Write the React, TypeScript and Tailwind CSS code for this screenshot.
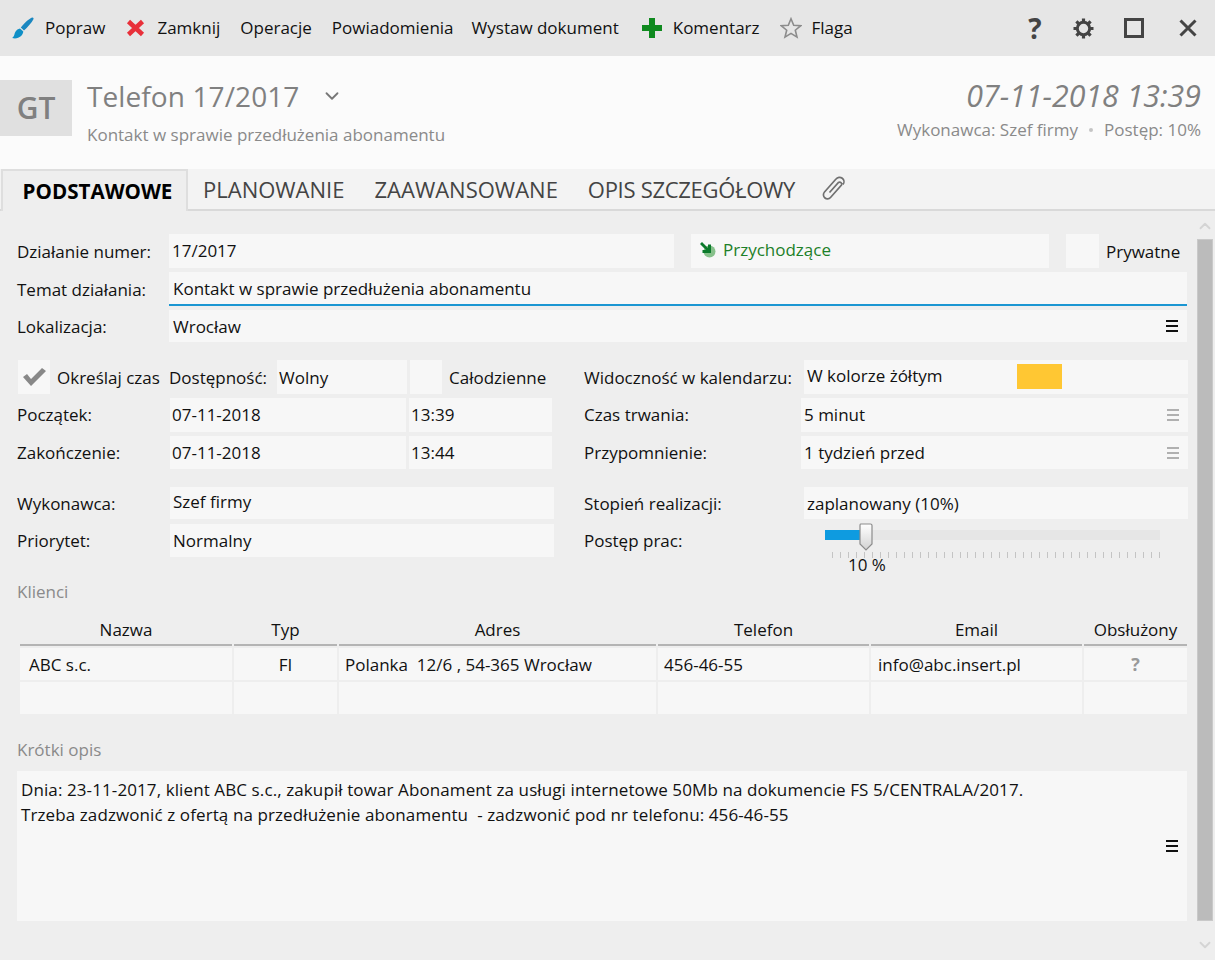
import type { ReactNode } from "react";
import { ChevronDown, ChevronUp } from "lucide-react";

const Menu = ({ light }: { light?: boolean }) => (
  <span className={`flex w-[12px] flex-col gap-[3px] ${light ? "opacity-30" : ""}`}>
    <span className="h-[2px] bg-[#111]" />
    <span className="h-[2px] bg-[#111]" />
    <span className="h-[2px] bg-[#111]" />
  </span>
);

const Brush = () => (
  <svg width="22" height="22" viewBox="0 0 22 22">
    <path d="M20 0.5 C21.5 0.3 22 1.5 21.3 2.6 C19.5 6 15.5 10.5 12 13.6 L8.8 10.6 C12 6.6 16.5 2 20 0.5 Z" fill="#1b87c0" />
    <path d="M8 11.5 L11.3 14.6 C11 18.5 7 22.2 1 21.3 C0.3 21.2 0.3 20.6 0.8 20.2 C2.6 19 2.2 16.5 3.6 14.4 C4.6 13 6 12 8 11.5 Z" fill="#0f8fc6" />
  </svg>
);

const RedX = () => (
  <svg width="19" height="18" viewBox="0 0 19 18">
    <path d="M2.5 2.5 L16.5 15.5 M16.5 2.5 L2.5 15.5" stroke="#e8303a" strokeWidth="4.6" fill="none" />
  </svg>
);

const Plus = () => (
  <svg width="22" height="22" viewBox="0 0 22 22">
    <path d="M8 1 H14 V8 H21 V14 H14 V21 H8 V14 H1 V8 H8 Z" fill="#0f8a1f" />
  </svg>
);

const StarOutline = () => (
  <svg width="22" height="22" viewBox="0 0 22 22">
    <path d="M11 1.8 L13.7 8.3 L20.6 8.8 L15.3 13.2 L17 20.1 L11 16.4 L5 20.1 L6.7 13.2 L1.4 8.8 L8.3 8.3 Z" fill="none" stroke="#8c8c8c" strokeWidth="1.6" strokeLinejoin="miter" />
  </svg>
);

const Gear = () => (
  <svg width="21" height="21" viewBox="0 0 21 21">
    <circle cx="10.5" cy="10.5" r="6.2" fill="none" stroke="#444" strokeWidth="3" />
    <path d="M10.5 0.5 V4 M10.5 17 V20.5 M0.5 10.5 H4 M17 10.5 H20.5 M3.4 3.4 L5.9 5.9 M15.1 15.1 L17.6 17.6 M17.6 3.4 L15.1 5.9 M5.9 15.1 L3.4 17.6" stroke="#444" strokeWidth="3.2" fill="none" />
  </svg>
);

const CloseIcon = () => (
  <svg width="18" height="18" viewBox="0 0 18 18">
    <path d="M1.5 1.5 L16.5 16.5 M16.5 1.5 L1.5 16.5" stroke="#444" strokeWidth="3" fill="none" />
  </svg>
);

const Clip = () => (
  <svg width="26" height="28" viewBox="0 0 26 28">
    <path d="M8.5 17.5 L17.5 7.5 A2 2 0 0 1 20.5 10 L9.5 22.5 A4 4 0 0 1 3.5 17 L15 4 A4.2 4.2 0 0 1 22 9.5" fill="none" stroke="#707070" strokeWidth="1.7" />
  </svg>
);

const Incoming = () => (
  <svg width="18" height="18" viewBox="0 0 18 18">
    <circle cx="10.5" cy="10.5" r="6" fill="#86c08a" />
    <path d="M1 3 L3 1 L9 7 L9 3.5 L12 3.5 L12 12 L3.5 12 L3.5 9 L7 9 Z" fill="#0b7a2b" />
  </svg>
);

const Check = () => (
  <svg width="26" height="22" viewBox="0 0 26 22">
    <path d="M2 11 L6 8 L10 13 L21 2 L25 5 L10 20 Z" fill="#888" />
  </svg>
);

const Field = ({ className, children }: { className: string; children?: ReactNode }) => (
  <div className={`flex items-center bg-[#f7f7f7] ${className}`}>{children}</div>
);

const Label = ({ className, children }: { className: string; children: ReactNode }) => (
  <div className={`flex shrink-0 items-center text-[#111] ${className}`}>{children}</div>
);

const columns = [
  { name: "Nazwa", width: "w-[212px]", value: "ABC s.c.", cell: "pl-[9px]" },
  { name: "Typ", width: "w-[103px]", value: "FI", cell: "justify-center" },
  { name: "Adres", width: "w-[317px]", value: "Polanka  12/6 , 54-365 Wrocław", cell: "pl-[6px]" },
  { name: "Telefon", width: "w-[211px]", value: "456-46-55", cell: "pl-[6px]" },
  { name: "Email", width: "w-[211px]", value: "info@abc.insert.pl", cell: "pl-[7px]" },
  { name: "Obsłużony", width: "w-[103px]", value: "", cell: "justify-center" },
];

const ticks = Array.from({ length: 42 });

export default function App() {
  return (
    <div className="flex h-[960px] w-[1215px] flex-col overflow-hidden bg-[#eeeeee] font-['Open_Sans',sans-serif] text-[17px] leading-[22px] text-[#111]">
      {/* toolbar */}
      <div className="flex h-[56px] shrink-0 items-center bg-[#e6e6e6] pl-[12px]">
        <Brush />
        <span className="ml-[11px]">Popraw</span>
        <span className="ml-[21px]"><RedX /></span>
        <span className="ml-[12px]">Zamknij</span>
        <span className="ml-[20px]">Operacje</span>
        <span className="ml-[20px]">Powiadomienia</span>
        <span className="ml-[18px]">Wystaw dokument</span>
        <span className="ml-[22px]"><Plus /></span>
        <span className="ml-[10px]">Komentarz</span>
        <span className="ml-[20px]"><StarOutline /></span>
        <span className="ml-[10px]">Flaga</span>
        <span className="ml-auto w-[20px] text-center text-[28px] font-bold text-[#444]">?</span>
        <span className="ml-[28px]"><Gear /></span>
        <span className="ml-[30px] h-[20px] w-[20px] border-[3px] border-[#444]" />
        <span className="ml-[35px] mr-[18px]"><CloseIcon /></span>
      </div>

      {/* header */}
      <div className="flex h-[113px] shrink-0 bg-[#fbfbfb] pt-[24px]">
        <div className="flex h-[56px] w-[72px] items-center justify-center bg-[#e0e0e0] text-[30px] font-semibold text-[#808080]">
          GT
        </div>
        <div className="ml-[15px] flex flex-col">
          <div className="-mt-[1px] flex h-[34px] items-center">
            <span className="text-[28px] leading-[34px] tracking-[0.1px] text-[#808080]">Telefon 17/2017</span>
            <ChevronDown size={22} strokeWidth={2} className="ml-[22px] text-[#777]" />
          </div>
          <span className="mt-[11px] text-[#8a8a8a]">Kontakt w sprawie przedłużenia abonamentu</span>
        </div>
        <div className="ml-auto mr-[14px] flex flex-col items-end">
          <span className="-mt-[1px] text-[30.3px] italic leading-[34px] text-[#808080]">07-11-2018 13:39</span>
          <div className="mt-[6px] flex items-center text-[#8a8a8a]">
            Wykonawca: Szef firmy
            <span className="mx-[11px] h-[4px] w-[4px] rounded-full bg-[#c4c4c4]" />
            Postęp: 10%
          </div>
        </div>
      </div>

      {/* tabs */}
      <div className="flex h-[42px] shrink-0 items-stretch border-b-2 border-[#d9d9d9] bg-[#f3f3f3] pl-[1px] text-[22px] text-[#444]">
        <div className="z-10 mb-[-2px] flex w-[187px] items-center justify-center border-x-2 border-t-2 border-[#dedede] bg-[#eeeeee] pl-[6px] text-[20.6px] font-bold text-black">
          PODSTAWOWE
        </div>
        <span className="ml-[15px] flex items-center">PLANOWANIE</span>
        <span className="ml-[30px] flex items-center">ZAAWANSOWANE</span>
        <span className="ml-[30px] flex items-center tracking-[-0.3px]">OPIS SZCZEGÓŁOWY</span>
        <span className="ml-[26px] flex items-center">
          <Clip />
        </span>
      </div>

      <div className="flex min-h-0 flex-1">
        {/* form */}
        <div className="flex w-[1197px] flex-col pl-[17px] pr-[9px] pt-[23px]">
          <div className="flex h-[34px]">
            <Label className="w-[152px] pt-[2px]">Działanie numer:</Label>
            <Field className="w-[505px] pl-[3px]">17/2017</Field>
            <Field className="ml-[17px] w-[358px] pb-[2px] pl-[8px] text-[#1d8029]">
              <Incoming />
              <span className="ml-[6px]">Przychodzące</span>
            </Field>
            <Field className="ml-[17px] w-[33px]" />
            <Label className="ml-[7px] pt-[2px]">Prywatne</Label>
          </div>
          <div className="mt-[4px] flex h-[34px]">
            <Label className="w-[152px] pt-[2px]">Temat działania:</Label>
            <Field className="w-[1018px] border-b-2 border-[#1b96d2] pl-[4px] pt-[2px]">Kontakt w sprawie przedłużenia abonamentu</Field>
          </div>
          <div className="mt-[4px] flex h-[32px]">
            <Label className="w-[152px] pt-[2px]">Lokalizacja:</Label>
            <Field className="w-[1018px] justify-between pl-[4px] pr-[9px]">
              <span className="pt-[2px]">Wrocław</span>
              <Menu />
            </Field>
          </div>

          <div className="mt-[18px] flex">
            <div className="flex w-[567px] flex-col">
              <div className="flex h-[34px]">
                <Field className="ml-[1px] w-[32px] justify-center">
                  <Check />
                </Field>
                <Label className="ml-[7px] w-[112px] pt-[2px]">Określaj czas</Label>
                <Label className="w-[108px] pt-[2px]">Dostępność:</Label>
                <Field className="w-[130px] pl-[2px] pt-[2px]">Wolny</Field>
                <Field className="ml-[3px] w-[32px]" />
                <Label className="ml-[7px] pt-[2px]">Całodzienne</Label>
              </div>
              <div className="mt-[4px] flex h-[34px]">
                <Label className="w-[153px]">Początek:</Label>
                <Field className="w-[236px] pl-[2px]">07-11-2018</Field>
                <Field className="ml-[3px] w-[143px] pl-[2px]">13:39</Field>
              </div>
              <div className="mt-[4px] flex h-[33px]">
                <Label className="w-[153px]">Zakończenie:</Label>
                <Field className="w-[236px] pl-[2px]">07-11-2018</Field>
                <Field className="ml-[3px] w-[143px] pl-[2px]">13:44</Field>
              </div>
              <div className="mt-[18px] flex h-[32px]">
                <Label className="w-[153px] pt-[2px]">Wykonawca:</Label>
                <Field className="w-[384px] pb-[2px] pl-[3px]">Szef firmy</Field>
              </div>
              <div className="mt-[5px] flex h-[33px]">
                <Label className="w-[153px]">Priorytet:</Label>
                <Field className="w-[384px] pl-[3px]">Normalny</Field>
              </div>
            </div>

            <div className="flex flex-1 flex-col">
              <div className="flex h-[34px]">
                <Label className="w-[220px] pt-[2px]">Widoczność w kalendarzu:</Label>
                <Field className="w-[384px] pl-[3px]">
                  <span className="w-[210px] pb-[2px]">W kolorze żółtym</span>
                  <span className="mb-[1px] h-[25px] w-[45px] bg-[#ffc733]" />
                </Field>
              </div>
              <div className="mt-[4px] flex h-[34px]">
                <Label className="w-[217px]">Czas trwania:</Label>
                <Field className="w-[387px] justify-between pl-[3px] pr-[9px]">
                  5 minut
                  <Menu light />
                </Field>
              </div>
              <div className="mt-[4px] flex h-[33px]">
                <Label className="w-[217px]">Przypomnienie:</Label>
                <Field className="w-[387px] justify-between pl-[3px] pr-[9px]">
                  1 tydzień przed
                  <Menu light />
                </Field>
              </div>
              <div className="mt-[18px] flex h-[32px]">
                <Label className="w-[220px] pt-[2px]">Stopień realizacji:</Label>
                <Field className="w-[384px] pl-[3px] pt-[2px]">zaplanowany (10%)</Field>
              </div>
              <div className="mt-[5px] flex h-[33px]">
                <Label className="w-[241px]">Postęp prac:</Label>
                <div className="relative mt-[6px] h-[10px] w-[335px] bg-[#e6e6e6]">
                  <div className="h-full w-[35px] bg-[#0e9be0]" />
                  <svg width="16" height="29" viewBox="0 0 16 29" className="absolute left-[33px] top-[-7px]">
                    <defs>
                      <linearGradient id="thumb" x1="0" y1="0" x2="0" y2="1">
                        <stop offset="0" stopColor="#ffffff" />
                        <stop offset="1" stopColor="#d2d2d2" />
                      </linearGradient>
                    </defs>
                    <path d="M2.5 1 H12.5 Q14 1 14 2.5 V21 L8 27 L2 21 V2.5 Q2 1 2.5 1 Z" fill="url(#thumb)" stroke="#8c8c8c" strokeWidth="1.2" />
                  </svg>
                  <div className="absolute left-[7px] top-[22px] flex w-[328px] justify-between">
                    {ticks.map((_, i) => (
                      <span key={i} className="h-[6px] w-[1px] bg-[#c4c4c4]" />
                    ))}
                  </div>
                  <span className="absolute left-[23px] top-[24px] whitespace-nowrap">10 %</span>
                </div>
              </div>
            </div>
          </div>

          <div className="mt-[24px] text-[#8a8a8a]">Klienci</div>

          {/* clients table */}
          <div className="ml-[3px] mt-[16px] flex gap-[2px]">
            {columns.map((c) => (
              <div key={c.name} className={`flex h-[27px] items-center justify-center border-b-2 border-[#b4b4b4] pb-[3px] ${c.width}`}>
                {c.name}
              </div>
            ))}
          </div>
          <div className="ml-[3px] mt-[2px] flex gap-[2px]">
            {columns.map((c) => (
              <Field key={c.name} className={`h-[32px] ${c.width} ${c.cell}`}>
                {c.name === "Obsłużony" ? <span className="text-[18px] font-bold text-[#999]">?</span> : <span className="whitespace-pre pt-[2px]">{c.value}</span>}
              </Field>
            ))}
          </div>
          <div className="ml-[3px] mt-[2px] flex gap-[2px]">
            {columns.map((c) => (
              <Field key={c.name} className={`h-[32px] ${c.width}`} />
            ))}
          </div>

          <div className="mt-[25px] text-[#8a8a8a]">Krótki opis</div>
          <div className="relative mt-[10px] h-[150px] w-[1170px] bg-[#f7f7f7] pl-[4px] pt-[6px] leading-[25px] tracking-[0.1px]">
            <p>Dnia: 23-11-2017, klient ABC s.c., zakupił towar Abonament za usługi internetowe 50Mb na dokumencie FS 5/CENTRALA/2017.</p>
            <p className="whitespace-pre">Trzeba zadzwonić z ofertą na przedłużenie abonamentu  - zadzwonić pod nr telefonu: 456-46-55</p>
            <span className="absolute right-[9px] top-[69px]"><Menu /></span>
          </div>
        </div>

        {/* scrollbar */}
        <div className="flex w-[16px] flex-col items-center">
          <ChevronUp size={18} strokeWidth={2.5} className="mt-[6px] text-[#d4d4d4]" />
          <div className="mt-[4px] h-[682px] w-[16px] border-[1px] border-[#c9c9c9] bg-[#bbbbbb]" />
          <ChevronDown size={18} strokeWidth={2.5} className="mt-[15px] text-[#d4d4d4]" />
        </div>
      </div>
    </div>
  );
}
